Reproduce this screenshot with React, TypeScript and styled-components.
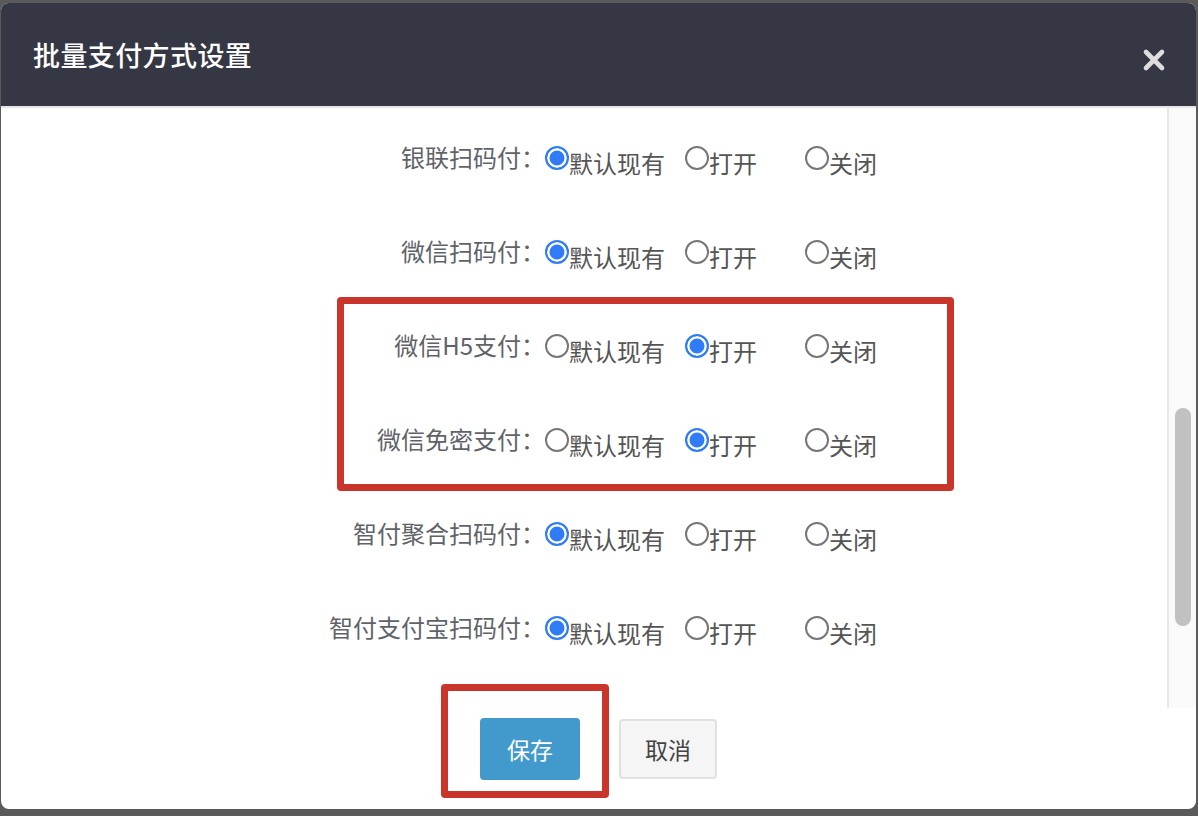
import { useLayoutEffect, useRef } from "react";
import styled, { createGlobalStyle } from "styled-components";

const GlobalStyle = createGlobalStyle`
  html, body {
    margin: 0;
    height: 816px;
    overflow: hidden;
    background: #5a5a5a;
    font-family: "Noto Sans CJK SC", "Noto Sans", sans-serif;
  }
`;

type Choice = "default" | "on" | "off";

const rows: { name: string; value: Choice }[] = [
  { name: "支付宝扫码付：", value: "default" },
  { name: "支付宝H5支付：", value: "default" },
  { name: "支付宝免密支付：", value: "default" },
  { name: "银联H5支付：", value: "default" },
  { name: "QQ扫码付：", value: "default" },
  { name: "京东扫码付：", value: "default" },
  { name: "百度扫码付：", value: "default" },
  { name: "翼支付扫码付：", value: "default" },
  { name: "银联扫码付：", value: "default" },
  { name: "微信扫码付：", value: "default" },
  { name: "微信H5支付：", value: "on" },
  { name: "微信免密支付：", value: "on" },
  { name: "智付聚合扫码付：", value: "default" },
  { name: "智付支付宝扫码付：", value: "default" },
  { name: "智付微信扫码付：", value: "default" },
  { name: "智付银联扫码付：", value: "default" },
];

const options: { key: Choice; text: string }[] = [
  { key: "default", text: "默认现有" },
  { key: "on", text: "打开" },
  { key: "off", text: "关闭" },
];

// scroll position of the list, and the matching thumb of the scrollbar
const SCROLL_TOP = 825;
const VIEW_HEIGHT = 600;
const CONTENT_HEIGHT = 110 + rows.length * 94 + 37;
const thumbHeight = Math.round((VIEW_HEIGHT * VIEW_HEIGHT) / CONTENT_HEIGHT);
const thumbTop = Math.round((SCROLL_TOP / (CONTENT_HEIGHT - VIEW_HEIGHT)) * (VIEW_HEIGHT - thumbHeight));

const App = () => {
  const viewRef = useRef<HTMLDivElement>(null);

  useLayoutEffect(() => {
    if (viewRef.current) {
      viewRef.current.scrollTop = SCROLL_TOP;
    }
  }, []);

  return (
    <>
      <GlobalStyle />
      <Dialog>
        <Header>
          <Title>批量支付方式设置</Title>
          <CloseButton aria-label="close">
            <svg width="24" height="24" viewBox="0 0 24 24">
              <path d="M4 4 L20 20 M20 4 L4 20" stroke="#dedede" strokeWidth="4.6" strokeLinecap="round" />
            </svg>
          </CloseButton>
        </Header>
        <Body>
          <Viewport ref={viewRef}>
            <Content>
              {rows.map((row) => (
                <Row key={row.name}>
                  <Label>{row.name}</Label>
                  {options.map((opt) => (
                    <Option key={opt.key}>
                      <Radio $checked={row.value === opt.key} />
                      <OptionText>{opt.text}</OptionText>
                    </Option>
                  ))}
                </Row>
              ))}
            </Content>
          </Viewport>
          <Track>
            <Thumb style={{ marginTop: thumbTop, height: thumbHeight }} />
          </Track>
        </Body>
        <Footer>
          <SaveButton>保存</SaveButton>
          <CancelButton>取消</CancelButton>
        </Footer>
        <Mark $left={336} $top={294} $width={617} $height={194} />
        <Mark $left={440} $top={681} $width={168} $height={114} />
      </Dialog>
    </>
  );
};

export default App;

const Dialog = styled.div`
  position: relative;
  width: 1195px;
  height: 806px;
  margin: 3px 0 0 1px;
  background: #fff;
  border-radius: 8px;
  overflow: hidden;
  display: flex;
  flex-direction: column;
`;

const Header = styled.div`
  height: 103px;
  flex-shrink: 0;
  background: #363744;
  border-bottom: 2px solid #e6e6e6;
  display: flex;
  align-items: center;
  justify-content: space-between;
  padding: 0 30px 0 32px;
`;

const Title = styled.h2`
  margin: 0;
  color: #fff;
  font-size: 27px;
  font-weight: 500;
  letter-spacing: 0.4px;
`;

const CloseButton = styled.span`
  display: flex;
  margin-top: 10px;
`;

const Body = styled.div`
  height: 600px;
  flex-shrink: 0;
  display: flex;
`;

const Viewport = styled.div`
  flex: 1;
  overflow: hidden;
`;

const Track = styled.div`
  width: 27px;
  flex-shrink: 0;
  background: #fafafa;
  border-left: 2px solid #e8e8e8;
`;

const Thumb = styled.div`
  width: 16px;
  margin-left: 6px;
  border-radius: 8px;
  background: #c1c1c1;
`;

const Content = styled.div`
  padding: 110px 0 37px;
`;

const Row = styled.div`
  height: 94px;
  display: flex;
  align-items: flex-start;
`;

const Label = styled.div`
  width: 544px;
  flex-shrink: 0;
  text-align: right;
  font-size: 24px;
  line-height: 24px;
  color: #5f6369;
`;

const Option = styled.label`
  display: flex;
  align-items: flex-start;
  flex-shrink: 0;
  min-width: 100px;
  margin-right: 20px;
`;

const Radio = styled.span<{ $checked: boolean }>`
  box-sizing: border-box;
  flex-shrink: 0;
  width: 24px;
  height: 24px;
  margin-top: 1px;
  border-radius: 50%;
  border: 2px solid ${(p) => (p.$checked ? "#2f7cf6" : "#777")};
  background: ${(p) => (p.$checked ? "#2f7cf6" : "#fff")};
  box-shadow: ${(p) => (p.$checked ? "inset 0 0 0 2.5px #fff" : "none")};
`;

const OptionText = styled.span`
  font-size: 24px;
  line-height: 24px;
  margin-top: 6px;
  color: #555;
  white-space: nowrap;
`;

const Footer = styled.div`
  flex: 1;
  display: flex;
  justify-content: center;
  align-items: flex-start;
  gap: 39px;
  padding-top: 10px;
`;

const SaveButton = styled.button`
  width: 100px;
  height: 62px;
  border: none;
  border-radius: 4px;
  background: #4299cc;
  color: #fff;
  font-family: inherit;
  font-size: 23px;
`;

const CancelButton = styled.button`
  width: 98px;
  height: 60px;
  margin-top: 1px;
  border: 2px solid #dfe1e3;
  border-radius: 4px;
  background: #f5f5f5;
  color: #444;
  font-family: inherit;
  font-size: 23px;
`;

const Mark = styled.div<{ $left: number; $top: number; $width: number; $height: number }>`
  position: absolute;
  left: ${(p) => p.$left}px;
  top: ${(p) => p.$top}px;
  width: ${(p) => p.$width}px;
  height: ${(p) => p.$height}px;
  box-sizing: border-box;
  border: 7px solid #c9352b;
  border-radius: 4px;
  pointer-events: none;
`;
